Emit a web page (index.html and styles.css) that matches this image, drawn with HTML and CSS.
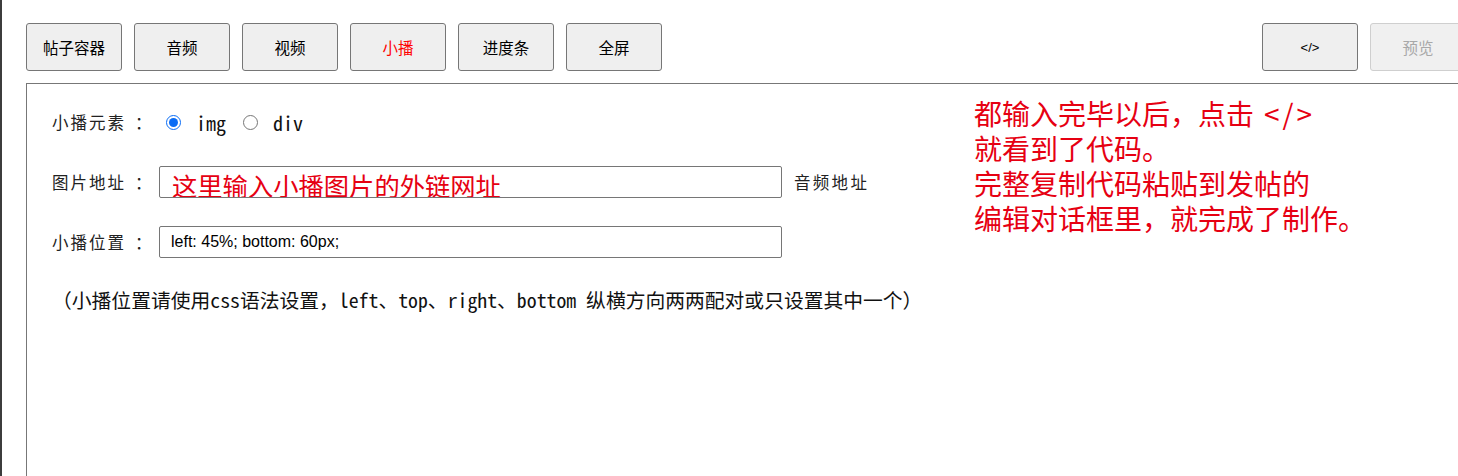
FILE: index.html
```html
<!DOCTYPE html>
<html lang="zh-CN">
<head>
<meta charset="utf-8">
<title>小播</title>
<link rel="stylesheet" href="styles.css">
</head>
<body>
<div class="page">
  <div class="app">
    <div class="toolbar">
      <div class="btn-group">
        <button class="btn">帖子容器</button>
        <button class="btn">音频</button>
        <button class="btn">视频</button>
        <button class="btn btn-active">小播</button>
        <button class="btn">进度条</button>
        <button class="btn">全屏</button>
      </div>
      <div class="btn-group">
        <button class="btn btn-code">&lt;/&gt;</button>
        <button class="btn btn-disabled" disabled>预览</button>
      </div>
    </div>
    <div class="panel">
      <div class="form">
        <div class="row">
          <span class="label">小播元素<span class="colon">：</span></span>
          <label class="choice"><input type="radio" name="el" checked> img</label>
          <label class="choice"><input type="radio" name="el"> div</label>
        </div>
        <div class="row">
          <span class="label">图片地址<span class="colon">：</span></span>
          <input class="field field-hint" type="text" value="这里输入小播图片的外链网址">
          <span class="side">音频地址</span>
        </div>
        <div class="row">
          <span class="label">小播位置<span class="colon">：</span></span>
          <input class="field" type="text" value="left: 45%; bottom: 60px;">
        </div>
        <div class="row note">（小播位置请使用css语法设置，left、top、right、bottom 纵横方向两两配对或只设置其中一个）</div>
      </div>
      <div class="tip">都输入完毕以后，点击<span class="tag">&lt;/&gt;</span><br>就看到了代码。<br>完整复制代码粘贴到发帖的<br>编辑对话框里，就完成了制作。</div>
    </div>
  </div>
</div>
</body>
</html>
```

FILE: styles.css
```css
html, body {
  margin: 0;
  padding: 0;
  overflow: hidden;
  background: #fff;
}

.page {
  border-left: 2px solid #3c3c3c;
  padding: 23px 0 0 24px;
  height: 476px;
  box-sizing: border-box;
  font-family: "Noto Sans CJK SC", "Liberation Sans", sans-serif;
}

.app {
  width: 1440px;
}

.toolbar {
  display: flex;
  justify-content: space-between;
  margin-bottom: 12px;
}

.btn-group {
  display: flex;
  gap: 12px;
}

.btn {
  width: 96px;
  height: 48px;
  padding: 0;
  border: 1px solid #767676;
  border-radius: 3px;
  background: #efefef;
  color: #000;
  font-family: "Noto Sans CJK SC", sans-serif;
  font-size: 15.5px;
}

.btn-active {
  color: #ff0000;
}

.btn-code {
  font-family: "Liberation Sans", sans-serif;
  font-size: 13px;
}

.btn-disabled {
  border-color: #cfcfcf;
  color: #a8a8a8;
  background: #f0f0f0;
}

.panel {
  display: flex;
  border: 1px solid #777;
  min-height: 420px;
  padding: 22px 0 0 25px;
}

.form {
  width: 922px;
  display: flex;
  flex-direction: column;
  gap: 28px;
}

.row {
  display: flex;
  align-items: center;
  height: 32px;
  color: #222;
}

.label {
  width: 107px;
  flex: none;
  font-size: 16.5px;
  letter-spacing: 2px;
  white-space: nowrap;
}

.colon {
  padding-left: 9px;
}

.choice {
  display: flex;
  align-items: center;
  font-family: "Noto Sans Mono CJK SC", "DejaVu Sans Mono", monospace;
  font-size: 20px;
  color: #111;
  white-space: pre;
  margin-right: 10px;
}

.choice input {
  width: 15px;
  height: 15px;
  margin: 0 5px 0 7px;
  accent-color: #0a6cf5;
}

.field {
  width: 623px;
  height: 32px;
  box-sizing: border-box;
  border: 1px solid #767676;
  border-radius: 2px;
  padding: 0 11px;
  font-family: "Liberation Sans", sans-serif;
  font-size: 16px;
  color: #000;
  margin: 0;
}

.field-hint {
  font-family: "Noto Sans CJK SC", sans-serif;
  font-size: 25.3px;
  color: #e60012;
  padding: 6px 12px 0;
}

.side {
  margin-left: 12px;
  font-size: 16.5px;
  letter-spacing: 2.3px;
}

.note {
  margin-top: -3px;
  font-family: "Noto Sans Mono CJK SC", "DejaVu Sans Mono", "Noto Sans CJK SC", monospace;
  font-size: 19.8px;
  color: #111;
  white-space: nowrap;
}

.tip {
  margin-top: -10px;
  font-size: 28px;
  line-height: 35px;
  color: #e60012;
  white-space: nowrap;
  align-self: flex-start;
}

.tag {
  padding-left: 10px;
  letter-spacing: 3px;
}
```
